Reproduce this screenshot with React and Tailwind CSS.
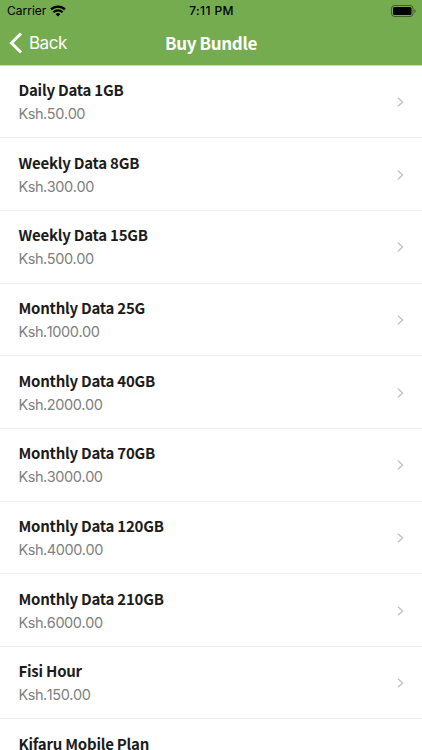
import React from 'react';

const bundles = [
  { name: 'Daily Data 1GB', price: 'Ksh.50.00' },
  { name: 'Weekly Data 8GB', price: 'Ksh.300.00' },
  { name: 'Weekly Data 15GB', price: 'Ksh.500.00' },
  { name: 'Monthly Data 25G', price: 'Ksh.1000.00' },
  { name: 'Monthly Data 40GB', price: 'Ksh.2000.00' },
  { name: 'Monthly Data 70GB', price: 'Ksh.3000.00' },
  { name: 'Monthly Data 120GB', price: 'Ksh.4000.00' },
  { name: 'Monthly Data 210GB', price: 'Ksh.6000.00' },
  { name: 'Fisi Hour', price: 'Ksh.150.00' },
  { name: 'Kifaru Mobile Plan' },
];

const StatusBar = () => (
  <div className="h-[22px] pl-[7px] pr-[6px] grid grid-cols-3 items-center text-[12px] text-black font-['Inter',sans-serif]">
    <div className="flex items-center gap-1">
      <span>Carrier</span>
      <svg width="16" height="12" viewBox="0 0 16 12" fill="none" stroke="black" strokeWidth="2.2">
        <path d="M1 4.4a10 10 0 0 1 14 0M3.4 7.2a6.5 6.5 0 0 1 9.2 0" />
        <path d="M8 11.6L5.7 9.3a3.2 3.2 0 0 1 4.6 0z" fill="black" stroke="none" />
      </svg>
    </div>
    <span className="text-center font-medium tracking-[0.4px]">7:11 PM</span>
    <svg className="justify-self-end" width="25" height="12" viewBox="0 0 25 12">
      <rect x="0.5" y="0.5" width="21.5" height="11" rx="3" fill="none" stroke="black" strokeOpacity="0.45" />
      <rect x="2" y="2" width="18.5" height="8" rx="1.5" fill="black" />
      <path d="M23.3 4v4c1.6-.6 1.6-3.4 0-4z" fill="black" fillOpacity="0.5" />
    </svg>
  </div>
);

const Header = () => (
  <header className="h-[65.7px] shrink-0 bg-[#75ac50] border-b border-[#c6deb5]">
    <StatusBar />
    <div className="h-[42px] grid grid-cols-3 items-center text-white">
      <div className="flex items-center gap-[6px] pl-[9px]">
        <svg width="14" height="22" viewBox="0 0 14 22" fill="none" stroke="white" strokeWidth="3">
          <path d="M12 1.5L2.5 11L12 20.5" />
        </svg>
        <span className="pt-0.5 text-[17px] font-normal tracking-[-0.5px] font-['Inter',sans-serif]">Back</span>
      </div>
      <h1 className="text-center text-[17px] tracking-[-0.35px] font-bold font-['Noto_Sans_CJK_SC',sans-serif]">Buy Bundle</h1>
    </div>
  </header>
);

const BundleRow = ({ name, price }) => (
  <li className="h-[72.65px] shrink-0 pl-[18.5px] pr-[18px] pt-[12.4px] flex items-start justify-between border-b border-[#efefef]">
    <div>
      <h2 className="text-[15px] leading-6 tracking-[-0.24px] font-bold text-[#1c1c1c] font-['Noto_Sans_CJK_SC',sans-serif]">{name}</h2>
      {price && (
        <p className="text-[14.5px] leading-6 tracking-[-0.45px] [font-kerning:none] font-normal text-[#808080] font-['Inter',sans-serif]">{price}</p>
      )}
    </div>
    <svg className="mt-[19px]" width="7" height="10" viewBox="0 0 7 10" fill="none" stroke="#c4c4c4" strokeWidth="1.5">
      <path d="M1 0.7L5.5 5L1 9.3" />
    </svg>
  </li>
);

const App = () => (
  <div className="h-screen flex flex-col overflow-hidden bg-white">
    <Header />
    <ul className="flex-1 min-h-0 flex flex-col overflow-hidden">
      {bundles.map((bundle) => (
        <BundleRow key={bundle.name} name={bundle.name} price={bundle.price} />
      ))}
    </ul>
  </div>
);

export default App;
